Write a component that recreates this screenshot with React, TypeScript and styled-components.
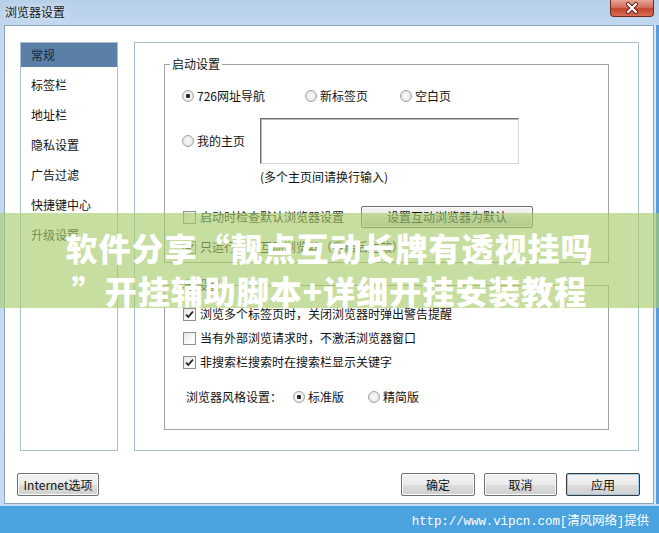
import React from "react";
import styled, { createGlobalStyle } from "styled-components";

const Global = createGlobalStyle`
  html, body { margin: 0; padding: 0; }
  body {
    width: 659px; height: 533px; overflow: hidden;
    background: #4aa2de;
    font-family: "Noto Sans CJK SC", "Microsoft YaHei", sans-serif;
    font-size: 12px; color: #111;
  }
`;

const Screen = styled.div`
  position: relative;
  width: 659px;
  height: 533px;
  display: flex;
  flex-direction: column;
  background: #4aa2de;
`;

const Window = styled.div`
  height: 506px;
  display: flex;
  flex-direction: column;
  background: linear-gradient(180deg, #b7cfe9 0%, #c3d9f0 6%, #c6dbf1 100%);
`;

const TitleBar = styled.div`
  height: 25px;
  display: flex;
  justify-content: space-between;
  align-items: flex-start;
  padding: 0 4px 0 5px;
`;

const TitleText = styled.div`
  margin-top: 4px;
  font-size: 12px;
  line-height: 16px;
  color: #151515;
  text-shadow: 0 0 6px rgba(255, 255, 255, 0.9);
`;

const CloseButton = styled.div`
  width: 44px;
  height: 17px;
  margin-right: 1px;
  box-sizing: border-box;
  border: 1px solid #6e2a1f;
  border-top: none;
  border-radius: 0 0 4px 4px;
  background: linear-gradient(180deg, #e6a597 0%, #d4715d 45%, #c2432c 55%, #d86e55 100%);
  display: flex;
  align-items: center;
  justify-content: center;
`;

const Client = styled.div`
  flex: 1;
  margin: 0 5px 2px 4px;
  background: #fff;
  border: 1px solid #8aa3bf;
  display: flex;
  flex-direction: column;
  box-shadow: 2px 0 0 #d6e5f5, 5px 0 0 #5c9bd6;
`;

const Main = styled.div`
  display: flex;
  gap: 16px;
  padding: 16px 14px 0 15px;
  height: 409px;
`;

const Nav = styled.div`
  width: 98px;
  box-sizing: border-box;
  border: 1px solid #a9bdd0;
  display: flex;
  flex-direction: column;
`;

const NavItem = styled.div<{ $active?: boolean }>`
  height: 24px;
  margin-bottom: 6px;
  padding-left: 10px;
  display: flex;
  align-items: center;
  line-height: 16px;
  color: ${(p) => (p.$active ? "#14263a" : "#111")};
  background: ${(p) => (p.$active ? "#5b80a8" : "transparent")};
`;

const Panel = styled.div`
  flex: 1;
  box-sizing: border-box;
  border: 1px solid #a9bdd0;
  padding: 13px 29px 0;
`;

const Group = styled.fieldset<{ $gap?: number }>`
  margin: ${(p) => p.$gap ?? 0}px 0 0;
  padding: 0;
  min-inline-size: 0;
  border: 1px solid #a3a3a3;
`;

const Legend = styled.legend`
  margin-left: 5px;
  padding: 0 2px;
  line-height: 16px;
  font-size: 12px;
`;

const GroupBody = styled.div<{ $top: number; $bottom: number }>`
  padding: ${(p) => p.$top}px 0 ${(p) => p.$bottom}px 17px;
  display: flex;
  flex-direction: column;
`;

const RadioGrid = styled.div<{ $cols: string }>`
  display: grid;
  grid-template-columns: ${(p) => p.$cols};
  align-items: center;
  height: 20px;
`;

const Option = styled.label`
  display: inline-flex;
  align-items: center;
  gap: 3px;
  line-height: 16px;
  white-space: nowrap;
`;

const RadioDot = styled.span<{ $checked?: boolean }>`
  width: 12px;
  height: 12px;
  box-sizing: border-box;
  border-radius: 50%;
  border: 1px solid #a2a2a2;
  background: radial-gradient(circle at 50% 50%, ${(p) => (p.$checked ? "#2a2a2a 0 2px, #f6f6f6 2.5px" : "#fbfbfb 0")}, #dcdcdc 100%);
  flex: none;
`;

const CheckBox = styled.span`
  width: 13px;
  height: 13px;
  box-sizing: border-box;
  border: 1px solid #8e8f8f;
  background: linear-gradient(135deg, #e6e6e6 0%, #f9f9f9 60%, #ffffff 100%);
  display: inline-flex;
  align-items: center;
  justify-content: center;
  flex: none;
`;

const HomeRow = styled.div`
  display: flex;
  align-items: center;
  height: 46px;
  margin-top: 12px;
`;

const HomeLabel = styled(Option)`
  width: 78px;
`;

const HomeInput = styled.textarea`
  width: 259px;
  height: 46px;
  box-sizing: border-box;
  margin: 0;
  padding: 2px;
  resize: none;
  border-style: solid;
  border-width: 1px;
  border-color: #6f6f6f #d6d6d6 #d6d6d6 #6f6f6f;
  box-shadow: inset 1px 1px 0 #b9b9b9;
  outline: none;
  font-family: inherit;
`;

const Hint = styled.div`
  margin: 5px 0 0 78px;
  line-height: 16px;
`;

const CheckRow = styled.div<{ $h: number; $gap?: number }>`
  display: flex;
  align-items: center;
  height: ${(p) => p.$h}px;
  margin-top: ${(p) => p.$gap ?? 0}px;
`;

const CheckLabel = styled.label<{ $w?: number }>`
  display: inline-flex;
  align-items: center;
  gap: 4px;
  line-height: 16px;
  white-space: nowrap;
  width: ${(p) => (p.$w ? `${p.$w}px` : "auto")};
  padding-left: 1px;
`;

const StyleLabel = styled.span`
  width: 111px;
  padding-left: 4px;
  box-sizing: border-box;
  line-height: 16px;
`;

const Button = styled.button<{ $w: number; $h?: number; $default?: boolean }>`
  width: ${(p) => p.$w}px;
  height: ${(p) => p.$h ?? 23}px;
  box-sizing: border-box;
  margin: 0;
  padding: 0;
  border: 1px solid ${(p) => (p.$default ? "#3a3a3a" : "#707070")};
  border-radius: 2px;
  background: linear-gradient(180deg, #f3f3f3 0%, #ebebeb 50%, #dddddd 51%, #cfcfcf 100%);
  box-shadow: ${(p) => (p.$default ? "inset 0 0 0 1px #9fcbe8" : "inset 0 0 0 1px #fcfcfc")};
  font-family: inherit;
  font-size: 12px;
  line-height: 16px;
  color: #111;
`;

const ButtonRow = styled.div`
  display: flex;
  align-items: center;
  gap: 9px;
  margin-top: 22px;
  padding: 0 13px 0 12px;
`;

const Spacer = styled.div`
  flex: 1;
`;

const Footer = styled.div`
  flex: 1;
  display: flex;
  align-items: center;
  justify-content: flex-end;
  padding-right: 10px;
  font-family: "Liberation Mono", "Noto Sans CJK SC", monospace;
  font-size: 12.5px;
  color: #fff;
  letter-spacing: -0.1px;
`;

const Banner = styled.div`
  position: absolute;
  left: 0;
  right: 0;
  top: 213px;
  height: 95px;
  background: rgba(168, 204, 108, 0.64);
  display: flex;
  flex-direction: column;
  align-items: center;
  padding-top: 13px;
  box-sizing: border-box;
  overflow: visible;
`;

const BannerLine = styled.div`
  height: 43px;
  line-height: 43px;
  font-family: "Noto Sans CJK SC", sans-serif;
  font-weight: 900;
  font-size: 32px;
  letter-spacing: 1px;
  color: #fff;
  white-space: nowrap;
`;

const Tick = () => (
  <svg width="11" height="11" viewBox="0 0 11 11">
    <path d="M2 5.5 L4.3 8 L9 2.5" fill="none" stroke="#1e1e1e" strokeWidth="1.8" />
  </svg>
);

const Radio = ({ label, checked }: { label: string; checked?: boolean }) => (
  <Option>
    <RadioDot $checked={checked} />
    {label}
  </Option>
);

const Check = ({ label, checked, w }: { label: string; checked?: boolean; w?: number }) => (
  <CheckLabel $w={w}>
    <CheckBox>{checked ? <Tick /> : null}</CheckBox>
    {label}
  </CheckLabel>
);

const navItems = ["常规", "标签栏", "地址栏", "隐私设置", "广告过滤", "快捷键中心", "升级设置"];

export default function App() {
  return (
    <Screen>
      <Global />
      <Window>
        <TitleBar>
          <TitleText>浏览器设置</TitleText>
          <CloseButton>
            <svg width="16" height="12" viewBox="0 0 16 12">
              <path d="M4 2 L12 10 M12 2 L4 10" stroke="#5a1d14" strokeWidth="4" strokeLinecap="round" />
              <path d="M4 2 L12 10 M12 2 L4 10" stroke="#ffffff" strokeWidth="2.2" strokeLinecap="round" />
            </svg>
          </CloseButton>
        </TitleBar>
        <Client>
          <Main>
            <Nav>
              {navItems.map((n, i) => (
                <NavItem key={n} $active={i === 0}>
                  {n}
                </NavItem>
              ))}
            </Nav>
            <Panel>
              <Group>
                <Legend>启动设置</Legend>
                <GroupBody $top={14} $bottom={5}>
                  <RadioGrid $cols="123px 95px auto">
                    <Radio label="726网址导航" checked />
                    <Radio label="新标签页" />
                    <Radio label="空白页" />
                  </RadioGrid>
                  <HomeRow>
                    <HomeLabel>
                      <RadioDot />
                      我的主页
                    </HomeLabel>
                    <HomeInput />
                  </HomeRow>
                  <Hint>(多个主页间请换行输入)</Hint>
                  <CheckRow $h={22} $gap={21}>
                    <Check label="启动时检查默认浏览器设置" w={178} />
                    <Button $w={172} $h={22}>设置互动浏览器为默认</Button>
                  </CheckRow>
                  <CheckRow $h={20} $gap={9}>
                    <Check label="只运行一个互动浏览器（重启后生效）" checked />
                  </CheckRow>
                </GroupBody>
              </Group>
              <Group $gap={14}>
                <Legend>其他设置</Legend>
                <GroupBody $top={9} $bottom={22}>
                  <CheckRow $h={24}>
                    <Check label="浏览多个标签页时，关闭浏览器时弹出警告提醒" checked />
                  </CheckRow>
                  <CheckRow $h={24}>
                    <Check label="当有外部浏览请求时，不激活浏览器窗口" />
                  </CheckRow>
                  <CheckRow $h={24}>
                    <Check label="非搜索栏搜索时在搜索栏显示关键字" checked />
                  </CheckRow>
                  <CheckRow $h={20} $gap={13}>
                    <StyleLabel>浏览器风格设置：</StyleLabel>
                    <RadioGrid $cols="75px auto">
                      <Radio label="标准版" checked />
                      <Radio label="精简版" />
                    </RadioGrid>
                  </CheckRow>
                </GroupBody>
              </Group>
            </Panel>
          </Main>
          <ButtonRow>
            <Button $w={82}>Internet选项</Button>
            <Spacer />
            <Button $w={74}>确定</Button>
            <Button $w={73}>取消</Button>
            <Button $w={74} $default>应用</Button>
          </ButtonRow>
        </Client>
      </Window>
      <Footer>http://www.vipcn.com[清风网络]提供</Footer>
      <Banner>
        <BannerLine>软件分享“靓点互动长牌有透视挂吗</BannerLine>
        <BannerLine>”开挂辅助脚本+详细开挂安装教程</BannerLine>
      </Banner>
    </Screen>
  );
}
